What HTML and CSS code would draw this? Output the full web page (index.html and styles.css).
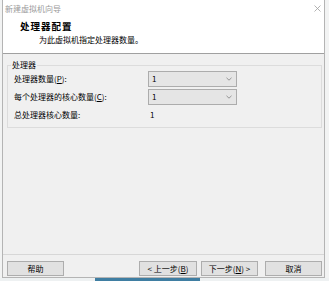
FILE: index.html
```html
<!DOCTYPE html>
<html lang="zh-CN">
<head>
    <meta charset="UTF-8">
    <title>新建虚拟机向导</title>
    <link rel="stylesheet" href="styles.css">
</head>
<body>
    <div class="window">
        <div class="header">
            <div class="titlebar">
                <span class="title">新建虚拟机向导</span>
                <svg class="close" width="7" height="7" viewBox="0 0 7 7">
                    <path d="M0.5 0.5 L6.5 6.5 M6.5 0.5 L0.5 6.5" stroke="#a0a0a0" stroke-width="0.8" fill="none"/>
                </svg>
            </div>
            <div class="heading">处理器配置</div>
            <div class="subtitle">为此虚拟机指定处理器数量。</div>
        </div>

        <div class="content">
            <fieldset class="group">
                <legend>处理器</legend>
                <div class="rows">
                    <span class="label">处理器数量(<u>P</u>):</span>
                    <div class="combo">
                        <span>1</span>
                        <svg width="6" height="4" viewBox="0 0 6 4"><path d="M0.5 0.8 L3 3.2 L5.5 0.8" stroke="#8a8a8a" stroke-width="0.9" fill="none"/></svg>
                    </div>

                    <span class="label">每个处理器的核心数量(<u>C</u>):</span>
                    <div class="combo">
                        <span>1</span>
                        <svg width="6" height="4" viewBox="0 0 6 4"><path d="M0.5 0.8 L3 3.2 L5.5 0.8" stroke="#8a8a8a" stroke-width="0.9" fill="none"/></svg>
                    </div>

                    <span class="label">总处理器核心数量:</span>
                    <span class="value">1</span>
                </div>
            </fieldset>
        </div>

        <div class="footer">
            <button class="btn">帮助</button>
            <span class="spacer"></span>
            <button class="btn wide">&lt; 上一步(<u>B</u>)</button>
            <button class="btn">下一步(<u>N</u>) &gt;</button>
            <button class="btn cancel">取消</button>
        </div>
    </div>
    <div class="desk"></div>
</body>
</html>
```

FILE: styles.css
```css
body {
    margin: 0;
    background-color: #f2f3f3;
    font-family: "Noto Sans CJK SC", "Noto Sans", sans-serif;
    font-size: 8px;
    line-height: 12px;
    color: #000;
}
.window {
    display: flex;
    flex-direction: column;
    margin-left: 2px;
    width: 321px;
    height: 277px;
    border: 1px solid #b4b4b4;
    border-top: none;
    background-color: #f0f0f0;
}
.header {
    height: 53px;
    background-color: #fff;
    border-bottom: 1px solid #a0a0a0;
}
.titlebar {
    display: flex;
    align-items: center;
    justify-content: space-between;
    height: 17px;
    padding: 0 3px 0 2px;
}
.title {
    color: #9a9a9a;
}
.close {
    margin-top: -1px;
}
.heading {
    margin-top: 3px;
    padding-left: 17px;
    font-size: 9.5px;
    font-weight: bold;
    letter-spacing: 1px;
}
.subtitle {
    margin-top: 2px;
    padding-left: 36px;
}
.content {
    flex: 1;
    padding: 5px 2px 0 4px;
}
.group {
    margin: 0;
    padding: 0 0 4px 6px;
    border: 1px solid #dcdcdc;
    min-inline-size: 0;
}
.group legend {
    margin-left: -3px;
    padding: 0 1px;
    line-height: 12px;
}
.rows {
    display: grid;
    grid-template-columns: 134px 89px;
    grid-template-rows: 16px 16px 16px;
    row-gap: 2px;
    align-items: center;
}
.combo {
    display: flex;
    align-items: center;
    justify-content: space-between;
    height: 14px;
    padding: 0 4px 0 3px;
    background-color: #e5e5e5;
    border: 1px solid #acacac;
}
.value {
    padding-left: 2px;
}
.footer {
    display: flex;
    align-items: flex-start;
    height: 23px;
    padding: 6px 2px 0 4px;
    border-top: 1px solid #d7d7d7;
    box-sizing: border-box;
}
.spacer {
    flex: 1;
}
.btn {
    width: 57px;
    height: 15px;
    margin: 0;
    padding: 0;
    font-family: inherit;
    font-size: 8px;
    line-height: 12px;
    color: #000;
    background-color: #e1e1e1;
    border: 1px solid #adadad;
}
.btn.wide {
    width: 58px;
    margin-right: 4px;
}
.btn.cancel {
    margin-left: 7px;
}
.desk {
    height: 4px;
    background: linear-gradient(to right, #eef1f2 95px, #3f7ea2 95px, #3f7ea2 200px, #eef1f2 200px);
}
```
